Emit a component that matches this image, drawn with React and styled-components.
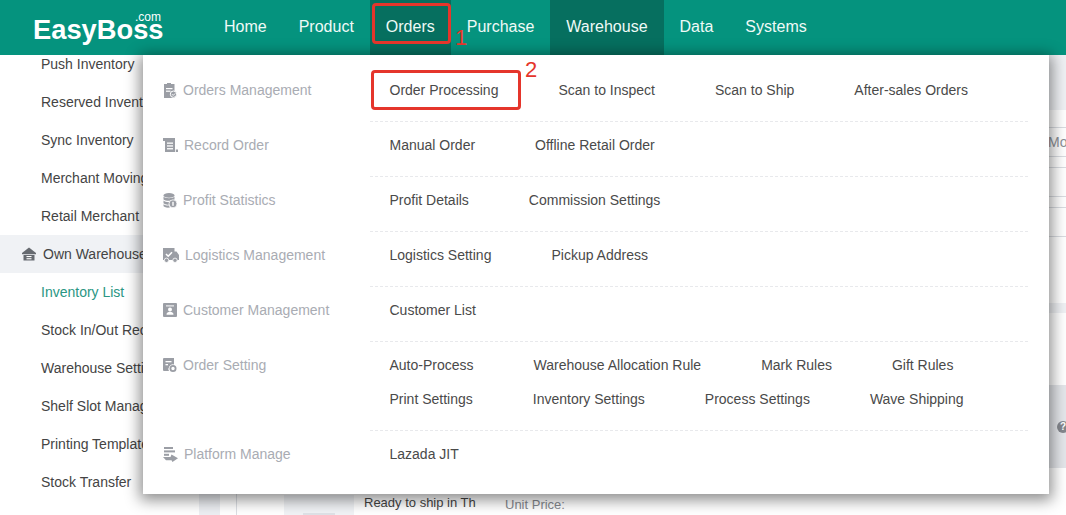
import React from "react";
import styled, { createGlobalStyle } from "styled-components";

const Global = createGlobalStyle`
  html, body { margin: 0; padding: 0; background: #fff; }
  body { font-family: "Liberation Sans", Arial, sans-serif; }
`;

const Page = styled.div`
  position: relative;
  width: 1066px;
  height: 515px;
  overflow: hidden;
  background: #fff;
  display: flex;
  flex-direction: column;
`;

const Header = styled.header`
  flex: none;
  height: 55px;
  background: #05937e;
  display: flex;
  align-items: stretch;
`;

const Logo = styled.div`
  position: relative;
  flex: none;
  width: 208px;
  padding-left: 33px;
  box-sizing: border-box;
  color: #fff;
  font-size: 27.3px;
  font-weight: 700;
  line-height: 59px;
`;

const LogoSuffix = styled.span`
  position: absolute;
  left: 135px;
  top: 11px;
  font-size: 12px;
  font-weight: 400;
  line-height: 12px;
`;

const Nav = styled.nav`
  display: flex;
`;

const NavItem = styled.div`
  padding: 0 16px 2px;
  display: flex;
  align-items: center;
  color: #effaf7;
  font-size: 16px;
  background: ${(p) => (p.$dark ? "#066f5f" : "transparent")};
`;

const Body = styled.div`
  flex: 1;
  min-height: 0;
  display: flex;
  overflow: hidden;
`;

const Sidebar = styled.aside`
  flex: none;
  width: 199px;
  margin-top: -10px;
  background: #fff;
`;

const SideItem = styled.div`
  height: 38px;
  display: flex;
  align-items: center;
  gap: 7px;
  padding-left: ${(p) => (p.$group ? "22px" : "41px")};
  background: ${(p) => (p.$group ? "#f0f2f5" : "transparent")};
  color: ${(p) => (p.$active ? "#2a9683" : "#444")};
  font-size: 14px;
  white-space: nowrap;
  overflow: hidden;
`;

const Gutter = styled.div`
  flex: none;
  width: 21px;
  background: #edeff3;
`;

const Main = styled.main`
  flex: 1;
  min-width: 0;
  margin-left: 16px;
  border-left: 1px solid #dcdfe4;
  display: flex;
  flex-direction: column;
  white-space: nowrap;
`;

const SearchBand = styled.div`
  flex: none;
  height: 55px;
  background: #eff1f4;
`;

const FieldRow = styled.div`
  flex: none;
  height: 28px;
  margin-top: ${(p) => p.$top}px;
  border-top: 1px solid #d9dce1;
  border-bottom: 1px solid #d9dce1;
  padding-left: 811px;
  color: #8c9097;
  font-size: 14px;
  line-height: 28px;
`;

const GreyStrip = styled.div`
  flex: none;
  height: 10px;
  margin-top: 66px;
  background: #eff1f4;
`;

const NoticeBand = styled.div`
  flex: none;
  height: 83px;
  margin-top: 72px;
  background: #e4e6ea;
  display: flex;
  align-items: center;
  padding-left: 820px;
`;

const HelpMark = styled.span`
  flex: none;
  width: 12px;
  height: 12px;
  border-radius: 50%;
  background: #85888e;
  color: #fff;
  font-size: 10px;
  font-weight: 700;
  line-height: 12px;
  text-align: center;
`;

const ProductRow = styled.div`
  flex: none;
  margin-top: 27px;
  padding-left: 47px;
  display: flex;
  align-items: flex-start;
`;

const Thumb = styled.div`
  flex: none;
  width: 70px;
  height: 40px;
  background: #f1f3f6;
  display: flex;
  justify-content: center;
  padding-top: 18px;
  box-sizing: border-box;
`;

const ThumbInner = styled.div`
  width: 32px;
  height: 22px;
  background: #dfe2e7;
`;

const ProductName = styled.div`
  margin-left: 10px;
  width: 112px;
  overflow: hidden;
  color: #444;
  font-size: 13px;
  line-height: 14px;
  padding-top: 1px;
`;

const PriceLabel = styled.div`
  margin-left: 29px;
  color: #85888e;
  font-size: 13px;
  line-height: 14px;
  padding-top: 3px;
`;

const Panel = styled.div`
  position: absolute;
  left: 143px;
  top: 55px;
  width: 906px;
  box-sizing: border-box;
  padding: 18px 21px 23px 20px;
  background: #fff;
  box-shadow: 0 3px 14px 3px rgba(0, 0, 0, 0.45);
`;

const MenuRow = styled.div`
  display: flex;
  align-items: flex-start;
`;

const MenuLabel = styled.div`
  flex: none;
  width: 207px;
  height: 34px;
  margin-top: ${(p) => (p.$first ? "0" : "6px")};
  display: flex;
  align-items: center;
  gap: 6px;
  color: #a9acb3;
  font-size: 14px;
`;

const MenuBody = styled.div`
  flex: 1;
  padding: ${(p) => (p.$first ? "0" : "6px")} 0 ${(p) => (p.$last ? "0" : "14px")} 19.5px;
  border-bottom: ${(p) => (p.$last ? "none" : "1px dashed #e8e9ec")};
`;

const LinkLine = styled.div`
  height: 34px;
  display: flex;
  align-items: center;
  gap: 60px;
`;

const MenuLink = styled.span`
  color: #4a4a4a;
  font-size: 14px;
  white-space: nowrap;
`;

const RedBox = styled.div`
  position: absolute;
  left: ${(p) => p.$x}px;
  top: ${(p) => p.$y}px;
  width: ${(p) => p.$w}px;
  height: ${(p) => p.$h}px;
  box-sizing: border-box;
  border: 3px solid #e5352b;
  border-radius: 4px;
`;

const RedNumber = styled.span`
  position: absolute;
  left: ${(p) => p.$x}px;
  top: ${(p) => p.$y}px;
  color: #e5352b;
  font-size: 22px;
  line-height: 22px;
`;

const GlyphSvg = styled.svg`
  flex: none;
  display: block;
  fill: ${(p) => p.$color || "#9b9ea5"};
`;

const Clipboard = () => (
  <GlyphSvg width="14" height="15" viewBox="0 0 14 15">
    <path d="M4 0h4v1h3.5v14H1V1h3z" />
    <rect x="3" y="5" width="6.5" height="1.2" fill="#fff" />
    <rect x="3" y="7.6" width="4.5" height="1.2" fill="#fff" />
    <circle cx="10.5" cy="11.2" r="3.2" stroke="#fff" strokeWidth="1" />
    <path d="M9 11.2l1.2 1.2 2-2" stroke="#fff" strokeWidth="1" fill="none" />
  </GlyphSvg>
);

const Scroll = () => (
  <GlyphSvg width="15" height="15" viewBox="0 0 15 15">
    <path d="M0 0h12v14H2V3H0z" />
    <rect x="4" y="4.5" width="6" height="1.3" fill="#fff" />
    <rect x="4" y="7.3" width="6" height="1.3" fill="#fff" />
    <rect x="4" y="10.1" width="6" height="1.3" fill="#fff" />
    <rect x="12.8" y="11.5" width="2.2" height="2.5" />
  </GlyphSvg>
);

const Coins = () => (
  <GlyphSvg width="14" height="15" viewBox="0 0 14 15">
    <ellipse cx="6" cy="2.4" rx="5.5" ry="2.4" />
    <path d="M.5 3.8c1.5 1.8 9.5 1.8 11 0V6.5c-1.5 1.8-9.5 1.8-11 0z" />
    <path d="M.5 7.6c1.5 1.4 4 1.7 6 1.5L6 11.6c-2 .2-4.5-.2-5.5-1.3z" />
    <path d="M.5 11.3c1 1 3.5 1.4 5.5 1.3l1 1.9c-3 .5-6.5-.3-6.5-1.4z" />
    <circle cx="10" cy="10.8" r="4" stroke="#fff" strokeWidth=".8" />
    <rect x="9.3" y="8.8" width="1.4" height="4" fill="#fff" />
  </GlyphSvg>
);

const Truck = () => (
  <GlyphSvg width="16" height="15" viewBox="0 0 16 15">
    <path d="M0 0h11.5v3.5h2L16 7v5H0z" />
    <path d="M3 6l2.2 2.2L9 4.2" stroke="#fff" strokeWidth="1.6" fill="none" />
    <circle cx="3.5" cy="12.3" r="2.2" stroke="#fff" strokeWidth=".8" />
    <circle cx="12" cy="12.3" r="2.2" stroke="#fff" strokeWidth=".8" />
  </GlyphSvg>
);

const Contact = () => (
  <GlyphSvg width="14" height="14" viewBox="0 0 14 14">
    <path d="M1 0h12a1 1 0 0 1 1 1v12a1 1 0 0 1-1 1H1a1 1 0 0 1-1-1V1a1 1 0 0 1 1-1z" />
    <rect x="3" y="2.4" width="8" height="1" fill="#fff" />
    <circle cx="7" cy="6.6" r="2" fill="#fff" />
    <path d="M3.5 11.8c0-2.2 1.6-3 3.5-3s3.5.8 3.5 3z" fill="#fff" />
  </GlyphSvg>
);

const DocGear = () => (
  <GlyphSvg width="14" height="14" viewBox="0 0 14 14">
    <path d="M1 0h10v6.5A4.5 4.5 0 0 0 6 13H1a1 1 0 0 1-1-1V1a1 1 0 0 1 1-1z" />
    <rect x="2.5" y="3" width="6" height="1.3" fill="#fff" />
    <rect x="2.5" y="6" width="2.5" height="1.3" fill="#fff" />
    <circle cx="10" cy="10.5" r="2.6" fill="none" stroke="#9b9ea5" strokeWidth="1.8" />
  </GlyphSvg>
);

const Platform = () => (
  <GlyphSvg width="15" height="15" viewBox="0 0 15 15">
    <rect x="1" y="0" width="9" height="2" />
    <rect x="1" y="3.4" width="11" height="2" />
    <rect x="1" y="6.8" width="5" height="2" />
    <path d="M0 10h7.5l1-2.5 6.5 3.7-5.5 3.8-1-1.8H3z" />
  </GlyphSvg>
);

const House = () => (
  <GlyphSvg $color="#666a70" width="14" height="14" viewBox="0 0 14 14">
    <path d="M7 .5L14 6v1.2H0V6z" />
    <path d="M1.5 8h11v5.5h-11z" />
    <rect x="4.5" y="9" width="5" height="1.1" fill="#fff" />
    <rect x="4.5" y="11.2" width="5" height="1.1" fill="#fff" />
  </GlyphSvg>
);

const navItems = [
  { label: "Home" },
  { label: "Product" },
  { label: "Orders", dark: true },
  { label: "Purchase" },
  { label: "Warehouse", dark: true },
  { label: "Data" },
  { label: "Systems" },
];

const sideItems = [
  { label: "Push Inventory" },
  { label: "Reserved Inventory" },
  { label: "Sync Inventory" },
  { label: "Merchant Moving" },
  { label: "Retail Merchant" },
  { label: "Own Warehouse", group: true },
  { label: "Inventory List", active: true },
  { label: "Stock In/Out Records" },
  { label: "Warehouse Settings" },
  { label: "Shelf Slot Management" },
  { label: "Printing Template" },
  { label: "Stock Transfer" },
];

const menu = [
  { label: "Orders Management", Icon: Clipboard, lines: [["Order Processing", "Scan to Inspect", "Scan to Ship", "After-sales Orders"]] },
  { label: "Record Order", Icon: Scroll, lines: [["Manual Order", "Offline Retail Order"]] },
  { label: "Profit Statistics", Icon: Coins, lines: [["Profit Details", "Commission Settings"]] },
  { label: "Logistics Management", Icon: Truck, lines: [["Logistics Setting", "Pickup Address"]] },
  { label: "Customer Management", Icon: Contact, lines: [["Customer List"]] },
  {
    label: "Order Setting",
    Icon: DocGear,
    lines: [
      ["Auto-Process", "Warehouse Allocation Rule", "Mark Rules", "Gift Rules"],
      ["Print Settings", "Inventory Settings", "Process Settings", "Wave Shipping"],
    ],
  },
  { label: "Platform Manage", Icon: Platform, lines: [["Lazada JIT"]] },
];

export default function App() {
  return (
    <Page>
      <Global />
      <Header>
        <Logo>
          EasyBoss
          <LogoSuffix>.com</LogoSuffix>
        </Logo>
        <Nav>
          {navItems.map((n) => (
            <NavItem key={n.label} $dark={n.dark}>{n.label}</NavItem>
          ))}
        </Nav>
      </Header>
      <Body>
        <Sidebar>
          {sideItems.map((s) => (
            <SideItem key={s.label} $group={s.group} $active={s.active}>
              {s.group && <House />}
              {s.label}
            </SideItem>
          ))}
        </Sidebar>
        <Gutter />
        <Main>
          <SearchBand />
          <FieldRow $top={17}>More</FieldRow>
          <FieldRow $top={10} />
          <FieldRow $top={10} />
          <GreyStrip />
          <NoticeBand>
            <HelpMark>?</HelpMark>
          </NoticeBand>
          <ProductRow>
            <Thumb><ThumbInner /></Thumb>
            <ProductName>Ready to ship in Thailand</ProductName>
            <PriceLabel>Unit Price:</PriceLabel>
          </ProductRow>
        </Main>
      </Body>
      <Panel>
        {menu.map((m, i) => {
          const first = i === 0;
          const last = i === menu.length - 1;
          return (
            <MenuRow key={m.label}>
              <MenuLabel $first={first}>
                <m.Icon />
                {m.label}
              </MenuLabel>
              <MenuBody $first={first} $last={last}>
                {m.lines.map((line) => (
                  <LinkLine key={line[0]}>
                    {line.map((t) => (
                      <MenuLink key={t}>{t}</MenuLink>
                    ))}
                  </LinkLine>
                ))}
              </MenuBody>
            </MenuRow>
          );
        })}
      </Panel>
      <RedBox $x={372} $y={3} $w={79} $h={41} />
      <RedNumber $x={455} $y={27}>1</RedNumber>
      <RedBox $x={371} $y={70} $w={150} $h={40} />
      <RedNumber $x={525} $y={59}>2</RedNumber>
    </Page>
  );
}
